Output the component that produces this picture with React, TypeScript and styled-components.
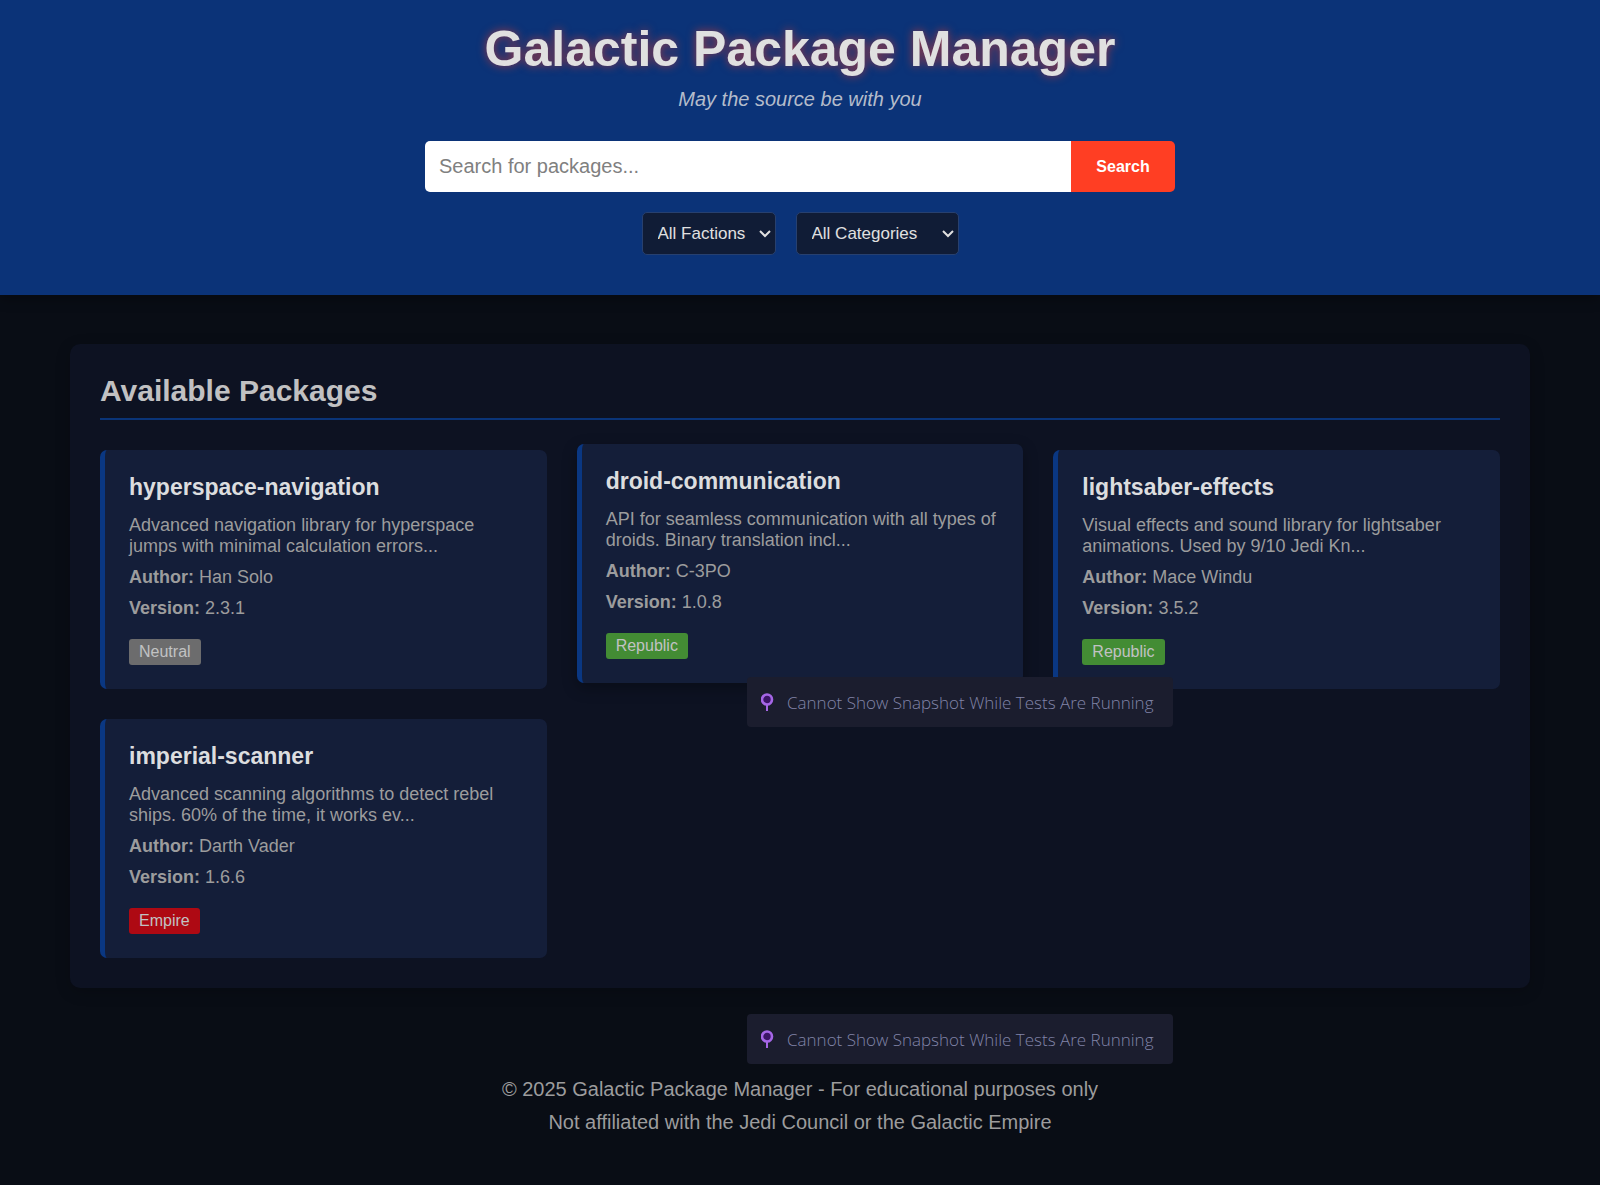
import React, { useState } from 'react';
import styled, { createGlobalStyle } from 'styled-components';

const GlobalStyle = createGlobalStyle`
  * {
    box-sizing: border-box;
    margin: 0;
    padding: 0;
  }

  body {
    background: #090d15;
    color: #9c9c9d;
    font-family: 'Liberation Sans', Arial, sans-serif;
    font-size: 18px;
  }
`;

const Page = styled.div`
  position: relative;
  min-height: 100vh;
`;

const Header = styled.header`
  display: flex;
  flex-direction: column;
  align-items: center;
  padding: 20px 20px 40px;
  background: #0b3378;
  box-shadow: 0 4px 12px rgba(0, 0, 0, 0.3);
`;

const Title = styled.h1`
  color: #e0e0e0;
  font-size: 50px;
  line-height: 58px;
  text-shadow: 0 0 10px rgba(255, 62, 35, 0.6);
`;

const Tagline = styled.p`
  margin-top: 10px;
  color: #b4bccb;
  font-size: 20px;
  font-style: italic;
  line-height: 23px;
`;

const SearchForm = styled.form`
  display: flex;
  width: 100%;
  max-width: 750px;
  height: 51px;
  margin-top: 30px;
`;

const SearchInput = styled.input`
  flex: 1;
  min-width: 0;
  padding: 0 14px;
  border: 0;
  border-radius: 5px 0 0 5px;
  background: #fff;
  color: #222;
  font: 20px 'Liberation Sans', Arial, sans-serif;

  &::placeholder {
    color: #808080;
  }
`;

const SearchButton = styled.button`
  width: 104px;
  border: 0;
  border-radius: 0 5px 5px 0;
  background: #ff3e23;
  color: #fff;
  font: bold 16px 'Liberation Sans', Arial, sans-serif;
  cursor: pointer;
`;

const Filters = styled.div`
  display: flex;
  flex-wrap: wrap;
  gap: 20px;
  margin-top: 20px;
`;

const SelectBox = styled.div<{ $width: number }>`
  position: relative;
  width: ${({ $width }) => $width}px;
`;

const FilterSelect = styled.select`
  display: block;
  width: 100%;
  height: 43px;
  padding: 0 20px 0 15px;
  appearance: none;
  border: 1px solid #27406f;
  border-radius: 5px;
  background: #101c36;
  color: #e0e0e0;
  font: 17px 'Liberation Sans', Arial, sans-serif;
`;

const SelectArrow = styled.svg`
  position: absolute;
  top: 18px;
  right: 5px;
  pointer-events: none;
`;

const Main = styled.main`
  padding: 49px 70px 0;
`;

const Panel = styled.section`
  padding: 30px;
  border-radius: 10px;
  background: #0d1222;
  box-shadow: 0 4px 15px rgba(0, 0, 0, 0.2);
`;

const PanelTitle = styled.h2`
  padding-bottom: 10px;
  margin-bottom: 30px;
  border-bottom: 2px solid #0a3478;
  color: #c1c1c2;
  font-size: 30px;
  line-height: 34px;
`;

const CardGrid = styled.div`
  display: grid;
  grid-template-columns: repeat(auto-fill, minmax(360px, 1fr));
  gap: 30px;
`;

const Card = styled.article<{ $raised?: boolean }>`
  padding: 24px;
  border-left: 5px solid #0a3782;
  border-radius: 7px;
  background: #141e39;
  transform: ${({ $raised }) => ($raised ? 'translateY(-6px)' : 'none')};
  box-shadow: ${({ $raised }) => ($raised ? '0 5px 15px rgba(0, 0, 0, 0.3)' : 'none')};
`;

const CardTitle = styled.h3`
  color: #dcdddf;
  font-size: 23px;
  line-height: 26px;
  margin-bottom: 15px;
`;

const CardText = styled.p`
  margin-bottom: 10px;
  line-height: 21px;
`;

const badgeColors = {
  Neutral: '#6c6c6d',
  Republic: '#438c34',
  Empire: '#ae0913',
};

type Faction = keyof typeof badgeColors;

const Badge = styled.span<{ $faction: Faction }>`
  display: block;
  width: fit-content;
  margin-top: 20px;
  padding: 0 10px;
  border-radius: 3px;
  background: ${({ $faction }) => badgeColors[$faction]};
  color: #c1c2c3;
  font-size: 16px;
  line-height: 26px;
`;

const Footer = styled.footer`
  display: grid;
  gap: 10px;
  padding: 90px 20px 50px;
  font-size: 20px;
  line-height: 23px;
  text-align: center;
`;

const Notice = styled.div<{ $top: number }>`
  position: absolute;
  top: ${({ $top }) => $top}px;
  left: calc(50% - 53px);
  display: flex;
  align-items: center;
  gap: 13px;
  min-width: 426px;
  height: 50px;
  padding: 0 14px;
  border-radius: 4px;
  background: #1b1d2e;
  color: #8184a8;
  font-family: 'Open Sans', 'Noto Sans', sans-serif;
  font-size: 17px;
  font-weight: 300;
  white-space: nowrap;
`;

const PinIcon = () => (
  <svg width="13" height="18" viewBox="0 0 13 18" aria-hidden="true">
    <path d="M6 11v7" stroke="#a566e6" strokeWidth="2" />
    <circle cx="6" cy="6.5" r="5" fill="#3b1466" stroke="#a566e6" strokeWidth="2.6" />
  </svg>
);

interface FilterProps {
  label: string;
  option: string;
  width: number;
}

const Filter = ({ label, option, width }: FilterProps) => (
  <SelectBox $width={width}>
    <FilterSelect aria-label={label}>
      <option>{option}</option>
    </FilterSelect>
    <SelectArrow width="12" height="8" viewBox="0 0 12 8" fill="none" aria-hidden="true">
      <path d="M1 1l5 5 5-5" stroke="#e0e0e0" strokeWidth="2" />
    </SelectArrow>
  </SelectBox>
);

interface Package {
  name: string;
  description: string;
  author: string;
  version: string;
  faction: Faction;
  raised?: boolean;
}

const packages: Package[] = [
  {
    name: 'hyperspace-navigation',
    description: 'Advanced navigation library for hyperspace jumps with minimal calculation errors...',
    author: 'Han Solo',
    version: '2.3.1',
    faction: 'Neutral',
  },
  {
    name: 'droid-communication',
    description: 'API for seamless communication with all types of droids. Binary translation incl...',
    author: 'C-3PO',
    version: '1.0.8',
    faction: 'Republic',
    raised: true,
  },
  {
    name: 'lightsaber-effects',
    description: 'Visual effects and sound library for lightsaber animations. Used by 9/10 Jedi Kn...',
    author: 'Mace Windu',
    version: '3.5.2',
    faction: 'Republic',
  },
  {
    name: 'imperial-scanner',
    description: 'Advanced scanning algorithms to detect rebel ships. 60% of the time, it works ev...',
    author: 'Darth Vader',
    version: '1.6.6',
    faction: 'Empire',
  },
];

const notices = [677, 1014];

export default function App() {
  const [query, setQuery] = useState('');

  return (
    <Page>
      <GlobalStyle />
      <Header>
        <Title>Galactic Package Manager</Title>
        <Tagline>May the source be with you</Tagline>
        <SearchForm onSubmit={(event) => event.preventDefault()}>
          <SearchInput
            type="text"
            aria-label="Search for packages"
            placeholder="Search for packages..."
            value={query}
            onChange={(event) => setQuery(event.target.value)}
          />
          <SearchButton type="submit">Search</SearchButton>
        </SearchForm>
        <Filters>
          <Filter label="Faction" option="All Factions" width={134} />
          <Filter label="Category" option="All Categories" width={163} />
        </Filters>
      </Header>
      <Main>
        <Panel>
          <PanelTitle>Available Packages</PanelTitle>
          <CardGrid>
            {packages.map((item) => (
              <Card key={item.name} $raised={item.raised}>
                <CardTitle>{item.name}</CardTitle>
                <CardText>{item.description}</CardText>
                <CardText>
                  <strong>Author:</strong> {item.author}
                </CardText>
                <CardText>
                  <strong>Version:</strong> {item.version}
                </CardText>
                <Badge $faction={item.faction}>{item.faction}</Badge>
              </Card>
            ))}
          </CardGrid>
        </Panel>
      </Main>
      <Footer>
        <p>© 2025 Galactic Package Manager - For educational purposes only</p>
        <p>Not affiliated with the Jedi Council or the Galactic Empire</p>
      </Footer>
      {notices.map((top) => (
        <Notice key={top} $top={top}>
          <PinIcon />
          Cannot Show Snapshot While Tests Are Running
        </Notice>
      ))}
    </Page>
  );
}
